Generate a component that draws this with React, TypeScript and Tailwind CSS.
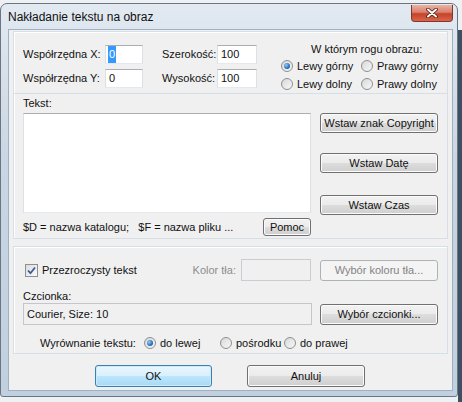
import React from "react";

const font = "font-['Liberation_Sans',Arial,sans-serif] text-[11px] text-[#111]";

function Btn({
  children,
  className = "",
  variant = "normal",
}: {
  children: React.ReactNode;
  className?: string;
  variant?: "normal" | "default" | "disabled";
}) {
  const look =
    variant === "default"
      ? "border-[#3c7fb1] bg-[linear-gradient(to_bottom,#eaf6fd_0%,#d9f0fc_50%,#bee6fd_50%,#a7d9f5_100%)] shadow-[inset_0_0_0_1px_#c8ecfb]"
      : variant === "disabled"
        ? "border-[#adb2b5] bg-[#f4f4f4] text-[#838383]"
        : "border-[#707070] bg-[linear-gradient(to_bottom,#f2f2f2_0%,#ebebeb_50%,#dddddd_50%,#cfcfcf_100%)] shadow-[inset_0_0_0_1px_#fbfbfb]";
  return (
    <div className={`flex items-center justify-center rounded-[3px] border leading-none ${look} ${className}`}>
      {children}
    </div>
  );
}

function Radio({ checked = false }: { checked?: boolean }) {
  return (
    <span className="flex h-[12px] w-[12px] shrink-0 items-center justify-center rounded-full border border-[#8e8f8f] bg-[linear-gradient(135deg,#d8d8d8,#f8f8f8)]">
      {checked && (
        <span className="h-[6px] w-[6px] rounded-full bg-[radial-gradient(circle_at_35%_35%,#8fd0f7,#1c5fae_70%,#0e3f82)]" />
      )}
    </span>
  );
}

function RadioLabel({ checked, label, className = "" }: { checked?: boolean; label: string; className?: string }) {
  return (
    <div className={`flex items-center gap-[4px] ${className}`}>
      <Radio checked={checked} />
      <span>{label}</span>
    </div>
  );
}

const edit = "border border-[#abadb3] border-x-[#dbdfe6] border-b-[#e3e9ef] bg-white";

export default function App() {
  return (
    <div className={`relative h-[402px] w-[462px] overflow-hidden bg-[#eef1f4] ${font}`}>
      {/* desktop strip at the right */}
      <div className="absolute right-0 top-[30px] h-[372px] w-[4px] bg-[#3e4f61]" />

      {/* window on the desktop */}
      <div className="absolute left-0 top-[3px] flex h-[394px] w-[458px] flex-col rounded-t-[7px] rounded-b-[3px] border border-[#6b7682] bg-[linear-gradient(to_bottom,#e2e9f1,#c9d6e3_40%,#c1d0df)]">
        {/* title bar */}
        <div className="relative flex h-[25px] shrink-0 items-center pl-[7px] pt-[1px] text-[12px]">
          Nakładanie tekstu na obraz
          <div className="absolute right-[4px] top-[1px] flex h-[17px] w-[42px] items-center justify-center rounded-b-[4px] border border-t-0 border-[#7a3a30] bg-[linear-gradient(to_bottom,#eab2a4_0%,#d9826c_45%,#c7412a_55%,#d9664a_100%)]">
            <svg width="12" height="10" viewBox="0 0 12 10">
              <path d="M2 1.5 L10 8.5 M10 1.5 L2 8.5" stroke="#4a1a12" strokeWidth="3.6" strokeLinecap="round" />
              <path d="M2 1.5 L10 8.5 M10 1.5 L2 8.5" stroke="#ffffff" strokeWidth="2" strokeLinecap="round" />
            </svg>
          </div>
        </div>

        {/* client area */}
        <div className="ml-[7px] h-[362px] w-[445px] border border-[#9fb0c2] bg-[#f0f0f0]">
          {/* panel 1 */}
          <div className="ml-[4px] mt-[1px] h-[208px] w-[435px] border border-[#d5dfe5] shadow-[inset_1px_1px_0_#ffffff]">
            {/* coordinates */}
            <div className="flex h-[62px] border-b border-[#d5dfe5]">
              <div className="flex flex-col gap-[5px] pl-[9px] pt-[13px]">
                <div className="flex h-[19px] items-center">
                  <span className="w-[82px]">Współrzędna X:</span>
                  <div className={`flex h-[19px] w-[38px] items-center pl-[2px] ${edit}`}>
                    <span className="bg-[#3399ff] px-[1px] text-white">0</span>
                  </div>
                  <span className="ml-[19px] w-[55px]">Szerokość:</span>
                  <div className={`flex h-[19px] w-[40px] items-center pl-[3px] ${edit}`}>100</div>
                </div>
                <div className="flex h-[19px] items-center">
                  <span className="w-[82px]">Współrzędna Y:</span>
                  <div className={`flex h-[19px] w-[38px] items-center pl-[3px] ${edit}`}>0</div>
                  <span className="ml-[19px] w-[55px]">Wysokość:</span>
                  <div className={`flex h-[19px] w-[40px] items-center pl-[3px] ${edit}`}>100</div>
                </div>
              </div>
              <div className="ml-[24px] flex w-[160px] flex-col pt-[10px]">
                <div className="h-[14px] pl-[30px] leading-[14px]">W którym rogu obrazu:</div>
                <div className="mt-[3px] flex h-[14px] items-center">
                  <RadioLabel checked label="Lewy górny" className="w-[80px]" />
                  <RadioLabel label="Prawy górny" />
                </div>
                <div className="mt-[4px] flex h-[14px] items-center">
                  <RadioLabel label="Lewy dolny" className="w-[80px]" />
                  <RadioLabel label="Prawy dolny" />
                </div>
              </div>
            </div>

            {/* text */}
            <div className="flex pl-[9px]">
              <div className="flex w-[288px] flex-col pt-[2px]">
                <div className="h-[14px] leading-[14px]">Tekst:</div>
                <div className={`mt-[3px] h-[100px] w-[288px] ${edit}`} />
                <div className="mt-[5px] flex h-[18px] items-center justify-between">
                  <span>$D = nazwa katalogu;&nbsp;&nbsp; $F = nazwa pliku ...</span>
                  <Btn className="h-[18px] w-[48px] rounded-[2px]">Pomoc</Btn>
                </div>
              </div>
              <div className="ml-[9px] flex w-[118px] flex-col pt-[19px]">
                <Btn className="h-[20px]">Wstaw znak Copyright</Btn>
                <Btn className="mt-[20px] h-[20px]">Wstaw Datę</Btn>
                <Btn className="mt-[22px] h-[20px]">Wstaw Czas</Btn>
              </div>
            </div>
          </div>

          {/* panel 2 */}
          <div className="ml-[4px] mt-[7px] h-[108px] w-[435px] border border-[#d5dfe5] pl-[9px] pt-[12px] shadow-[inset_1px_1px_0_#ffffff]">
            <div className="flex h-[22px] items-center">
              <div className="flex w-[218px] items-center">
                <span className="ml-[2px] flex h-[13px] w-[13px] items-center justify-center border border-[#8e8f8f] bg-[linear-gradient(135deg,#dcdcdc,#fafafa)]">
                  <svg width="11" height="11" viewBox="0 0 11 11">
                    <path d="M2 5.5 L4.5 8.2 L9 2.5" fill="none" stroke="#3d5a98" strokeWidth="1.8" />
                  </svg>
                </span>
                <span className="ml-[4px]">Przezroczysty tekst</span>
                <span className="ml-auto pr-[5px] text-[#8d8d8d]">Kolor tła:</span>
              </div>
              <div className="h-[22px] w-[70px] border border-[#c9cdd3] bg-[#f0f0f0]" />
              <Btn variant="disabled" className="ml-[9px] h-[21px] w-[118px]">
                Wybór koloru tła...
              </Btn>
            </div>
            <div className="mt-[8px] h-[14px] leading-[14px]">Czcionka:</div>
            <div className="flex items-start">
              <div className="flex h-[22px] w-[289px] items-center border border-[#c3c7cc] bg-[#f0f0f0] pl-[3px]">
                Courier, Size: 10
              </div>
              <Btn className="ml-[8px] mt-[1px] h-[21px] w-[118px]">Wybór czcionki...</Btn>
            </div>
            <div className="ml-[17px] mt-[11px] flex h-[14px] items-center">
              <span className="w-[104px]">Wyrównanie tekstu:</span>
              <RadioLabel checked label="do lewej" className="w-[76px]" />
              <RadioLabel label="pośrodku" className="w-[64px]" />
              <RadioLabel label="do prawej" />
            </div>
          </div>

          {/* dialog buttons */}
          <div className="ml-[86px] mt-[11px] flex">
            <Btn variant="default" className="h-[22px] w-[117px]">OK</Btn>
            <Btn className="ml-[35px] h-[22px] w-[118px]">Anuluj</Btn>
          </div>
        </div>
      </div>
    </div>
  );
}
